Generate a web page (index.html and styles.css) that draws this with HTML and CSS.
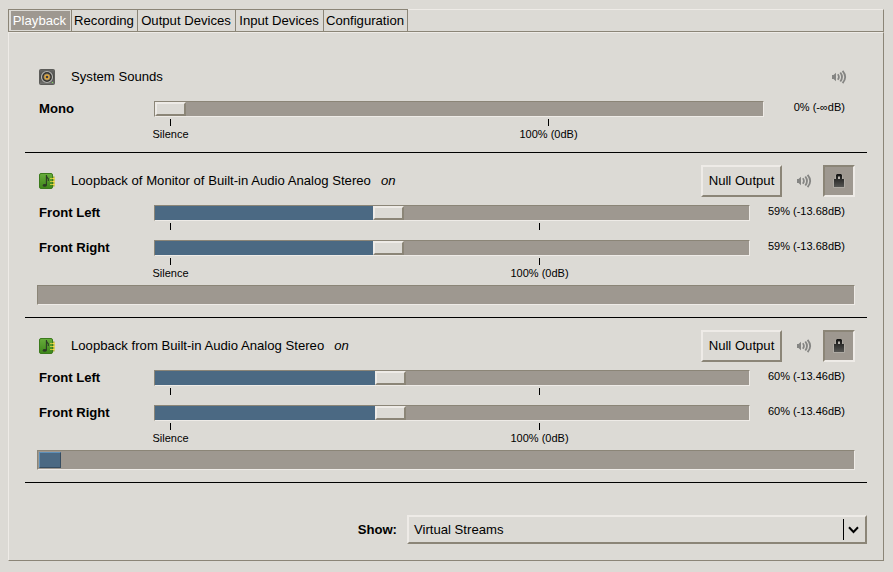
FILE: index.html
```html
<!DOCTYPE html>
<html lang="en">
<head>
<meta charset="utf-8">
<title>Volume Control</title>
<link rel="stylesheet" href="styles.css">
</head>
<body>
<svg class="defs" width="0" height="0">
  <defs>
    <linearGradient id="lockFill" x1="0" y1="0" x2="0" y2="1"><stop offset="0" stop-color="#111110"/><stop offset="1" stop-color="#555552"/></linearGradient>
    <linearGradient id="boxFill" x1="0" y1="0" x2="0" y2="1"><stop offset="0" stop-color="#696966"/><stop offset=".5" stop-color="#484846"/><stop offset="1" stop-color="#777774"/></linearGradient>
    <linearGradient id="cardFill" x1="0" y1="0" x2="0" y2="1"><stop offset="0" stop-color="#68ad3c"/><stop offset="1" stop-color="#3e861a"/></linearGradient>
    <symbol id="volume" viewBox="0 0 16 16">
      <path d="M1 6h1.5L5 3.8v8.4L2.5 10H1z" fill="#858583"/>
      <path d="M6.8 5.2q2.2 2.8 0 5.6M9.3 3.5q3.4 4.5 0 9M11.6 1.8q5.2 6.2 0 12.4" fill="none" stroke="#858583" stroke-width="1.8"/>
    </symbol>
    <symbol id="lock" viewBox="0 0 16 16">
      <path d="M2.5 6.5h2v-3q0-2 2-2h3q2 0 2 2v3h2v8h-11z" fill="none" stroke="#aeaaa3" stroke-width="1"/>
      <path d="M5 2L6 1h4l1 1v4h2v8H3V6h2z" fill="url(#lockFill)"/>
      <path d="M7 3.5h2V6H7z" fill="#b8b4ae"/>
    </symbol>
    <symbol id="speaker" viewBox="0 0 16 16">
      <rect x=".5" y=".5" width="15" height="15" rx="1" fill="url(#boxFill)" stroke="#5c5c59"/>
      <circle cx="8" cy="8" r="5.5" fill="#343432" stroke="#b4b4b0" stroke-width="1.2"/>
      <circle cx="8" cy="8" r="3.1" fill="#e5ac3d" stroke="#90806a" stroke-width=".8"/>
      <circle cx="8" cy="8" r="1.3" fill="#3b3b45"/>
      <rect x="13" y="13" width="1" height="1" fill="#7fe05c"/>
    </symbol>
    <symbol id="card" viewBox="0 0 16 16">
      <path d="M13 3.5h2.5v10H13z" fill="#96a52c"/>
      <path d="M11 5.5h5M11 8.5h5M11 11.5h5" stroke="#f4dc50" stroke-width="1.4"/>
      <rect x=".5" y=".5" width="13" height="15" rx="1.5" fill="url(#cardFill)" stroke="#3b7a1c"/>
      <path d="M11 5.5h3M11 8.5h3M11 11.5h3" stroke="#c9c83f"/>
      <path d="M7.4 2v10.5M7.4 2.5q.3 2 1.9 3.2V8" fill="none" stroke="#2c3c25" stroke-width="1.1"/>
      <ellipse cx="5.7" cy="12.4" rx="2" ry="1.4" fill="#2c3c25"/>
    </symbol>
  </defs>
</svg>
<div class="notebook">
  <div class="tabs">
    <div class="tab tab-playback active"><span>Playback</span></div>
    <div class="tab tab-recording"><span>Recording</span></div>
    <div class="tab tab-output"><span>Output Devices</span></div>
    <div class="tab tab-input"><span>Input Devices</span></div>
    <div class="tab tab-config"><span>Configuration</span></div>
    <div class="tab-filler"></div>
  </div>
  <div class="panel">
    <section class="stream system">
      <header class="head"><svg class="icon"><use href="#speaker"/></svg><span class="title">System Sounds</span><svg class="mute"><use href="#volume"/></svg></header>
      <div class="channel">
        <span class="name">Mono</span>
        <div class="scale">
          <div class="trough"><div class="thumb"></div></div>
          <div class="marks"><div class="mark">Silence</div><div class="mark">100% (0dB)</div></div>
        </div>
        <span class="value">0% (-∞dB)</span>
      </div>
    </section>
    <section class="stream">
      <header class="head"><svg class="icon"><use href="#card"/></svg><span class="title">Loopback of Monitor of Built-in Audio Analog Stereo</span><i>on</i><button class="device">Null Output</button><svg class="mute"><use href="#volume"/></svg><button class="lock"><svg><use href="#lock"/></svg></button></header>
      <div class="channel">
        <span class="name">Front Left</span>
        <div class="scale">
          <div class="trough"><div class="fill" style="width:218px"></div><div class="thumb"></div></div>
          <div class="marks"><div class="mark"></div><div class="mark"></div></div>
        </div>
        <span class="value">59% (-13.68dB)</span>
      </div>
      <div class="channel">
        <span class="name">Front Right</span>
        <div class="scale">
          <div class="trough"><div class="fill" style="width:218px"></div><div class="thumb"></div></div>
          <div class="marks"><div class="mark">Silence</div><div class="mark">100% (0dB)</div></div>
        </div>
        <span class="value">59% (-13.68dB)</span>
      </div>
      <div class="meter"></div>
    </section>
    <section class="stream">
      <header class="head"><svg class="icon"><use href="#card"/></svg><span class="title">Loopback from Built-in Audio Analog Stereo</span><i>on</i><button class="device">Null Output</button><svg class="mute"><use href="#volume"/></svg><button class="lock"><svg><use href="#lock"/></svg></button></header>
      <div class="channel">
        <span class="name">Front Left</span>
        <div class="scale">
          <div class="trough"><div class="fill" style="width:220px"></div><div class="thumb"></div></div>
          <div class="marks"><div class="mark"></div><div class="mark"></div></div>
        </div>
        <span class="value">60% (-13.46dB)</span>
      </div>
      <div class="channel">
        <span class="name">Front Right</span>
        <div class="scale">
          <div class="trough"><div class="fill" style="width:220px"></div><div class="thumb"></div></div>
          <div class="marks"><div class="mark">Silence</div><div class="mark">100% (0dB)</div></div>
        </div>
        <span class="value">60% (-13.46dB)</span>
      </div>
      <div class="meter"><div class="level" style="width:22px"></div></div>
    </section>
    <footer class="show">
      <b>Show:</b>
      <div class="combo"><span>Virtual Streams</span><svg width="24" height="21" viewBox="0 0 24 21"><path d="M.5 0v21" stroke="#000"/><path d="M6 8.3l4.5 4.7L15 8.3" fill="none" stroke="#000" stroke-width="2"/></svg></div>
    </footer>
  </div>
</div>
</body>
</html>
```
FILE: styles.css
```css
:root {
  --bg: #dcdad5;
  --light: #eeebe7;
  --dark: #8b8577;
  --trough: #9e9890;
  --blue: #4b6983;
}
* { box-sizing: border-box; }
body {
  margin: 0;
  width: 893px;
  height: 572px;
  padding: 9px 9px 11px 8px;
  background: var(--bg);
  color: #000;
  font: 13.14px/16px "Liberation Sans", Arial, sans-serif;
  overflow: hidden;
}
.defs { position: absolute; }
svg { display: block; flex: none; }
button { font: inherit; color: inherit; background: var(--bg); padding: 0; }
.notebook { width: 876px; height: 552px; display: flex; flex-direction: column; }
.tabs { display: flex; height: 23px; }
.tab {
  border: solid var(--dark);
  border-width: 1px 1px 1px 0;
  padding: 1px;
  text-align: center;
  white-space: nowrap;
}
.tab span { display: block; height: 19px; line-height: 20px; margin: 0 -1px; padding-right: 1px; }
.tab.active span { background: var(--trough); color: #fff; margin: 0 0 0 1px; padding-right: 2px; }
.tab-playback { width: 64px; border-left-width: 1px; }
.tab-recording { width: 66px; }
.tab-output { width: 98px; }
.tab-input { width: 88px; }
.tab-config { width: 84px; }
.tab-filler { flex: 1; border: solid var(--dark); border-width: 1px 1px 1px 0; border-top-color: var(--light); }
.panel {
  flex: 1;
  border: 1px solid var(--dark);
  border-top-color: var(--light);
  border-left-color: var(--light);
  padding: 0 16px;
}
.stream { height: 165px; border-bottom: 1px solid #000; padding: 12px 12px 0 12px; }
.stream.system { height: 120px; padding-top: 28px; }
.head { display: flex; align-items: center; height: 32px; padding-left: 2px; }
.system .head { padding-right: 8px; }
.icon { width: 16px; height: 16px; margin-right: 16px; }
.title { white-space: nowrap; }
.head i { margin-left: 10px; }
.mute { width: 16px; height: 16px; margin-left: auto; }
.device {
  width: 81px;
  height: 32px;
  margin-left: auto;
  border: 2px solid;
  border-color: var(--light) var(--dark) var(--dark) var(--light);
}
.device + .mute { margin: 0 11px 0 14px; }
.lock {
  width: 32px;
  height: 32px;
  border: 2px solid;
  border-color: var(--dark) var(--light) var(--light) var(--dark);
  background: var(--trough);
  display: grid;
  place-items: center;
}
.lock svg { width: 16px; height: 16px; }
.channel { display: flex; height: 35px; padding: 8px 10px 0 2px; align-items: flex-start; }
.name { width: 115px; flex: none; font-weight: bold; }
.scale { width: 596px; flex: none; }
.system .scale { width: 610px; }
.trough {
  display: flex;
  height: 16px;
  border: 1px solid;
  border-color: var(--dark) var(--light) var(--light) var(--dark);
  background: var(--trough);
}
.fill { background: var(--blue); }
.thumb {
  width: 31px;
  height: 14px;
  border: 2px solid;
  border-color: var(--light) var(--dark) var(--dark) var(--light);
  background: var(--bg);
}
.marks { display: grid; grid-template-columns: 33px 1fr; padding-top: 2px; font-size: 11px; line-height: 16px; white-space: nowrap; }
.mark { display: flex; flex-direction: column; align-items: center; width: 33px; }
.mark + .mark { margin-left: 302px; width: 101px; }
.system .mark + .mark { margin-left: 311px; }
.mark::before { content: ""; width: 1px; height: 7px; background: #000; }
.value { flex: 1; text-align: right; font-size: 11px; line-height: 13px; white-space: nowrap; }
.meter {
  height: 20px;
  margin-top: 18px;
  padding: 1px;
  border: 1px solid;
  border-color: var(--dark) var(--light) var(--light) var(--dark);
  background: var(--trough);
}
.level { height: 16px; background: var(--blue); border: 1px solid; border-color: #5c8fb9 #364c60 #364c60 #5c8fb9; }
.show { display: flex; align-items: center; justify-content: flex-end; gap: 10px; padding-top: 32px; }
.combo {
  width: 460px;
  height: 29px;
  display: flex;
  align-items: center;
  justify-content: space-between;
  padding-left: 5px;
  border: 2px solid;
  border-color: var(--light) var(--dark) var(--dark) var(--light);
}
.combo svg { margin-right: -2px; }
```
